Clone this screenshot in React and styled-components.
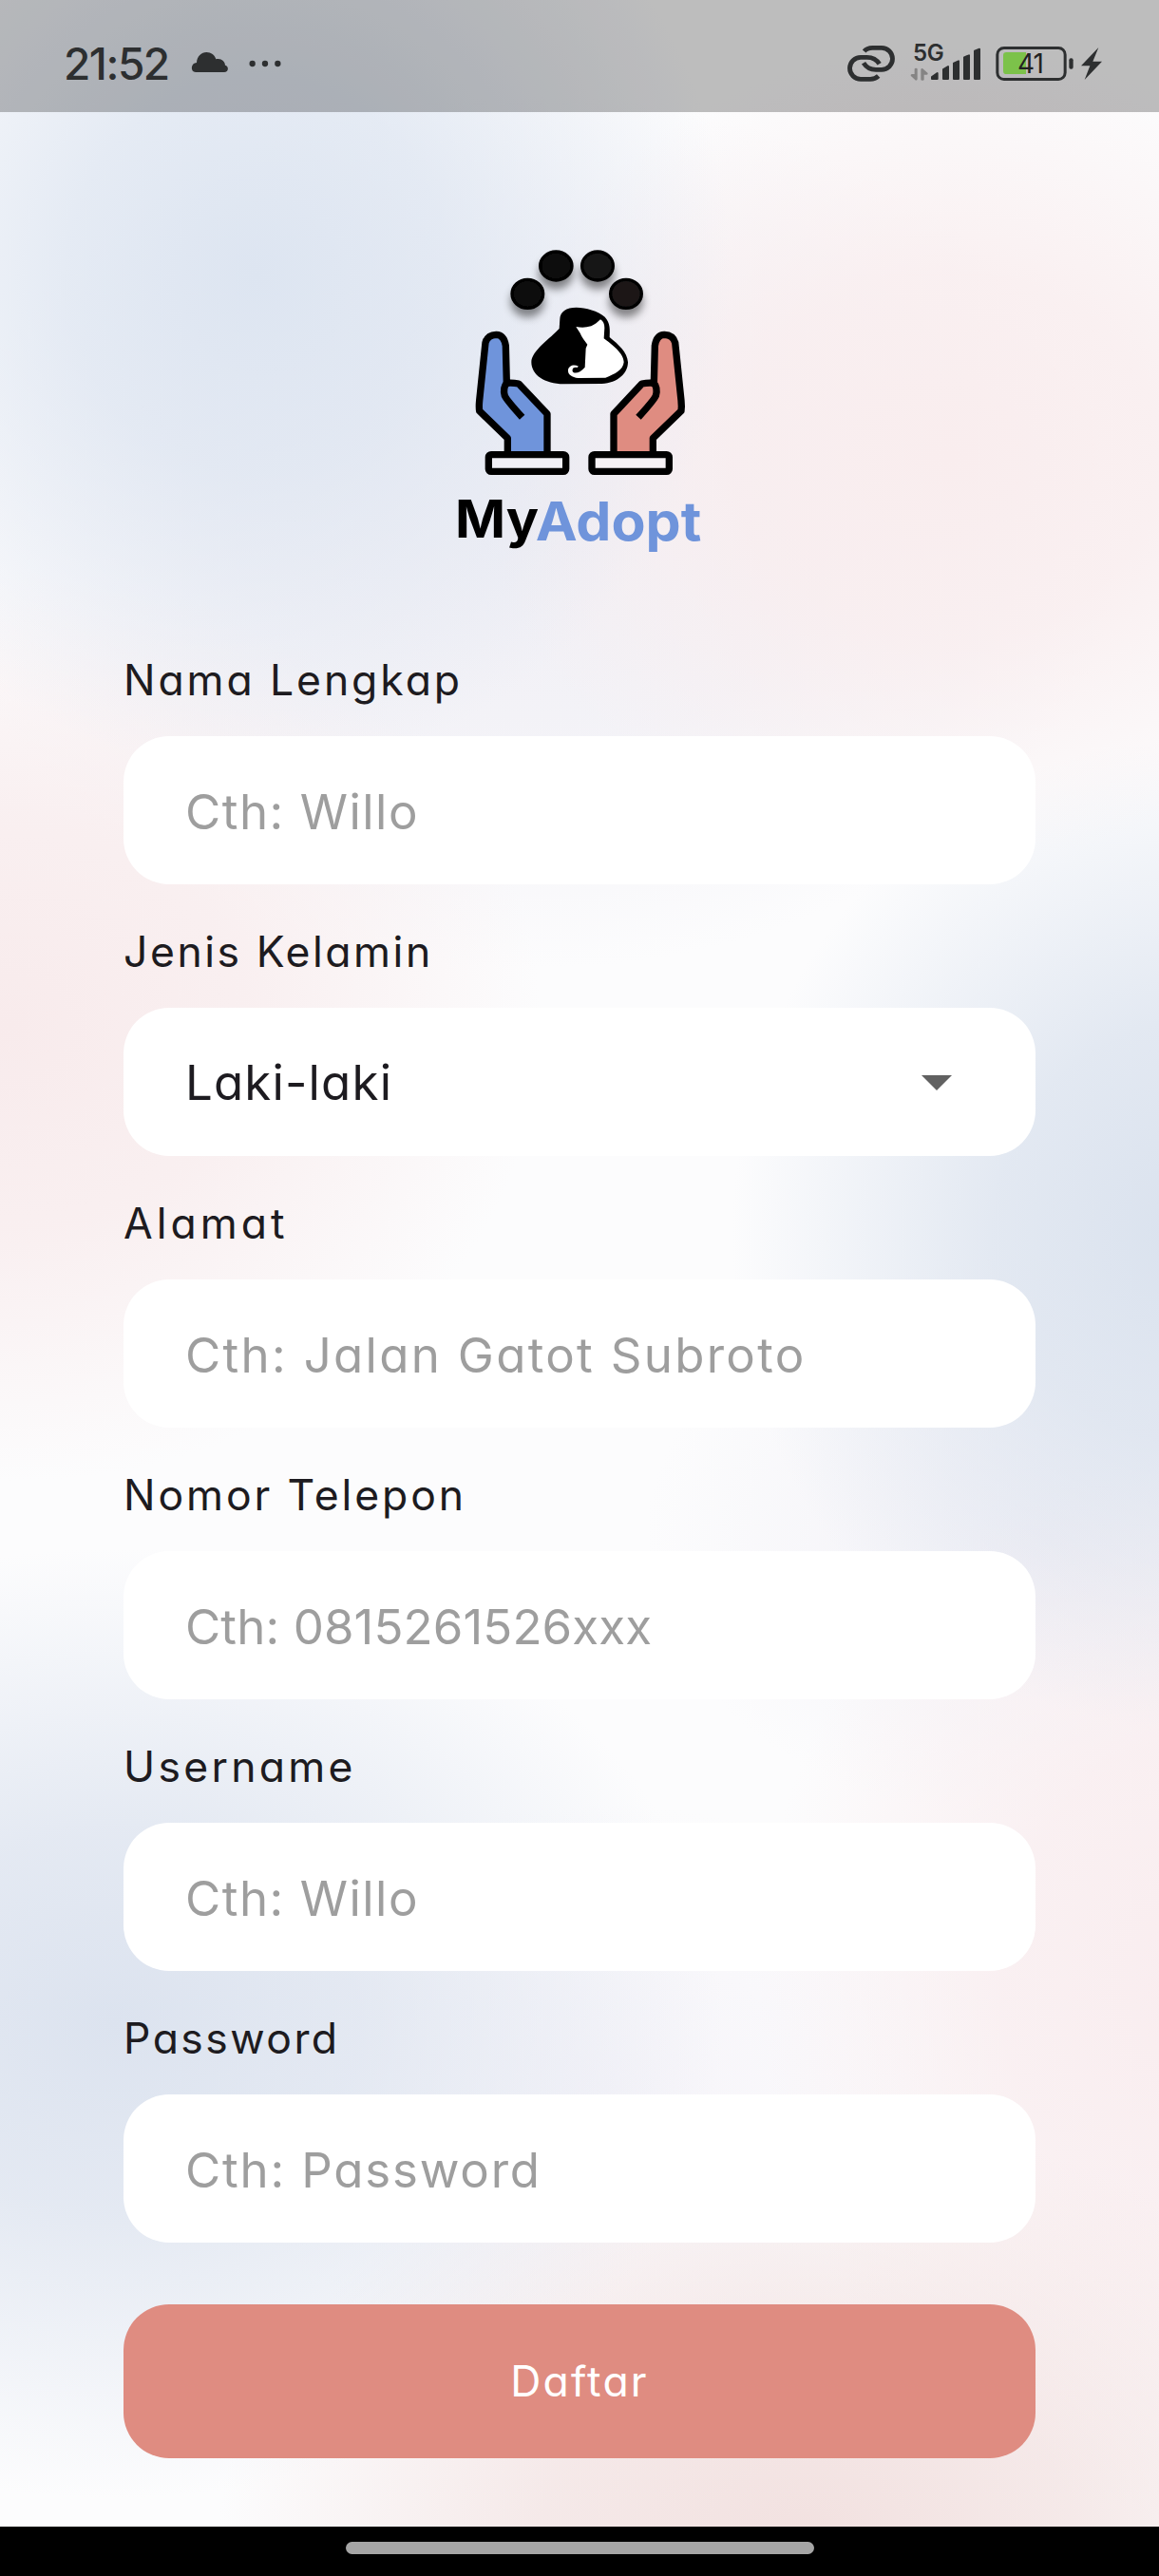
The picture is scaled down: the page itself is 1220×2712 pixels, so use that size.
import React from "react";
import styled, { createGlobalStyle, css } from "styled-components";

const GlobalStyle = createGlobalStyle`
  *, *::before, *::after { box-sizing: border-box; }
  body { margin: 0; background: #fafafc; }
`;

const fontStack = css`font-family: Inter, "Open Sans", sans-serif; font-feature-settings: "cv11";`;

const Screen = styled.div`
  ${fontStack}
  width: 1220px;
  height: 2712px;
  display: flex;
  flex-direction: column;
  color: #1d1b20;
  background:
    radial-gradient(ellipse 500px 520px at 270px 290px, #dde5f1 0%, rgba(221, 229, 241, 0.75) 40%, rgba(221, 229, 241, 0) 100%),
    radial-gradient(ellipse 500px 430px at 1000px 480px, #f9edee 0%, rgba(249, 237, 238, 0.8) 45%, rgba(249, 237, 238, 0) 100%),
    radial-gradient(ellipse 560px 480px at 10px 1080px, #f8ebec 0%, rgba(248, 235, 236, 0.75) 45%, rgba(248, 235, 236, 0) 100%),
    radial-gradient(ellipse 480px 520px at 1250px 1300px, #dae2ee 0%, rgba(218, 226, 238, 0.75) 42%, rgba(218, 226, 238, 0) 100%),
    radial-gradient(ellipse 640px 500px at 120px 2130px, #dce3ef 0%, rgba(220, 227, 239, 0.75) 40%, rgba(220, 227, 239, 0) 100%),
    radial-gradient(ellipse 620px 440px at 850px 2670px, #f2e1e0 0%, rgba(242, 225, 224, 0.7) 45%, rgba(242, 225, 224, 0) 100%),
    radial-gradient(ellipse 460px 560px at 1260px 2090px, #f9edef 0%, rgba(249, 237, 239, 0.8) 45%, rgba(249, 237, 239, 0) 100%),
    radial-gradient(ellipse 620px 460px at 560px 560px, #f0eff5 0%, rgba(240, 239, 245, 0.7) 50%, rgba(240, 239, 245, 0) 100%),
    radial-gradient(ellipse 420px 300px at 640px 2200px, #f6f4f9 0%, rgba(246, 244, 249, 0) 100%),
    radial-gradient(ellipse 420px 300px at 1100px 1620px, #f1f0f6 0%, rgba(241, 240, 246, 0) 100%),
    #fcfcfd;
`;

const StatusBar = styled.header`
  height: 118px;
  flex: none;
  padding: 16px 59px 0 67px;
  display: flex;
  align-items: center;
  justify-content: space-between;
  background: rgba(0, 0, 0, 0.25);
  color: #2d2f30;
`;

const StatusGroup = styled.div`
  display: flex;
  align-items: center;
`;

const Clock = styled.span`
  width: 134px;
  font-size: 46px;
  line-height: 56px;
  font-weight: 500;
  letter-spacing: -1.5px;
  white-space: nowrap;
`;

const Glyph = styled.svg`
  display: block;
  flex: none;
  width: ${(p) => p.$w}px;
  height: 40px;
  margin-left: ${(p) => p.$gap || 0}px;
  overflow: visible;
`;

const Content = styled.main`
  flex: 1;
  display: flex;
  flex-direction: column;
  align-items: center;
  padding: 122px 130px 0;
`;

const Logo = styled.svg`
  display: block;
  flex: none;
  width: 300px;
  height: 360px;
  margin-bottom: 45px;
`;

const Form = styled.form`
  width: 100%;
  display: flex;
  flex-direction: column;
`;

const Label = styled.label`
  height: 130px;
  padding-top: 41px;
  font-size: 44.5px;
  line-height: 60px;
  letter-spacing: ${(p) => p.$tracking}px;
  white-space: nowrap;
`;

const Box = styled.div`
  height: 156px;
  border-radius: 48px;
  background: #fff;
  padding: ${(p) => (p.$select ? 2 : 4)}px 88px 0 65px;
  display: flex;
  align-items: center;
  justify-content: space-between;
  font-size: 51px;
  line-height: 60px;
  color: ${(p) => (p.$select ? "#1d1b20" : "#9e9e9e")};
`;

const Value = styled.span`
  letter-spacing: ${(p) => p.$tracking}px;
  white-space: nowrap;
`;

const Caret = styled.svg`
  width: 32px;
  height: 16px;
  fill: #616161;
`;

const Submit = styled.button`
  ${fontStack}
  height: 162px;
  margin-top: 65px;
  padding: 0;
  border: 0;
  border-radius: 48px;
  background: #df8c81;
  color: #fff;
  font-size: 44.5px;
  line-height: 60px;
  letter-spacing: 2.2px;
`;

const NavBar = styled.footer`
  height: 52px;
  flex: none;
  display: flex;
  justify-content: center;
  align-items: flex-start;
  padding-top: 16px;
  background: #000;
`;

const NavHandle = styled.div`
  width: 493px;
  height: 13px;
  border-radius: 7px;
  background: #a5a5a5;
`;

const fields = [
  { label: "Nama Lengkap", labelTracking: 2.9, value: "Cth: Willo", valueTracking: 1.5 },
  { label: "Jenis Kelamin", labelTracking: 2.55, value: "Laki-laki", valueTracking: 1.15, select: true },
  { label: "Alamat", labelTracking: 4, value: "Cth: Jalan Gatot Subroto", valueTracking: 2.3 },
  { label: "Nomor Telepon", labelTracking: 2.9, value: "Cth: 0815261526xxx", valueTracking: 0.1 },
  { label: "Username", labelTracking: 3.3, value: "Cth: Willo", valueTracking: 1.5 },
  { label: "Password", labelTracking: 2.45, value: "Cth: Password", valueTracking: 1.8 },
];

const PetLogo = () => (
  <Logo viewBox="0 0 900 1080" role="img" aria-label="MyAdopt">
    <defs>
      <filter id="padShadow" x="-50%" y="-50%" width="200%" height="220%">
        <feDropShadow dx="0" dy="24" stdDeviation="12" floodColor="#000" floodOpacity="0.45" />
      </filter>
    </defs>
    <g stroke="#000" strokeWidth="10" filter="url(#padShadow)">
      <ellipse cx="286" cy="208" rx="49" ry="45" fill="#0a0a0a" />
      <ellipse cx="376" cy="120" rx="50" ry="45" fill="#0a0a0a" />
      <ellipse cx="507" cy="120" rx="49" ry="45" fill="#151515" />
      <ellipse cx="597" cy="208" rx="49" ry="45" fill="#1b1819" />
    </g>
    <path d="M440 251 C408 251 389 264 388 288 L386 318 C360 347 298 388 298 424 C298 464 340 493 400 493 L520 492 C572 490 603 458 603 424 C601 392 573 368 545 345 C546 322 548 300 530 281 C508 262 470 251 440 251 Z" fill="#000" />
    <path d="M439 312 C455 315 470 315 487 310 C499 305 507 297 516 289 C525 294 529 303 529 316 L527 349 C552 368 590 396 590 424 C588 448 562 462 532 473 L446 474 C426 471 413 463 414 449 C415 435 432 429 447 437 L442 441 C432 439 426 444 428 453 C434 463 452 457 467 440 L470 380 L475 368 C468 358 456 344 452 332 Z" fill="#fff" />
    <g stroke="#000" strokeWidth="22" strokeLinejoin="round">
      <path d="M223 716 V664 L134 578 Q132 565 134 545 L153 362 Q160 338 187 337 Q212 338 217 372 L220 490 Q238 488 258 492 L348 587 V716 Z" fill="#6f94db" />
      <path d="M221 489 Q207 505 214 530 Q220 544 269 598" fill="none" />
      <path d="M682 716 V664 L771 578 Q773 565 771 545 L752 362 Q745 338 718 337 Q693 338 688 372 L685 490 Q667 488 647 492 L558 587 V716 Z" fill="#df8c81" />
      <path d="M684 489 Q698 505 691 530 Q685 544 636 598" fill="none" />
      <rect x="163" y="716" width="244" height="53" rx="8" fill="#f1f0f6" />
      <rect x="489" y="716" width="244" height="53" rx="8" fill="#f6f2f5" />
    </g>
    <text x="57" y="977" fontFamily="Inter, sans-serif" fontWeight="700" fontSize="166" textLength="264" lengthAdjust="spacingAndGlyphs" fill="#000">My</text>
    <text x="311" y="986" fontFamily="Inter, sans-serif" fontWeight="700" fontSize="168" textLength="524" lengthAdjust="spacingAndGlyphs" fill="#6f94db">Adopt</text>
  </Logo>
);

const CloudIcon = () => (
  <Glyph $w={40} viewBox="603 141 120 120" fill="currentColor">
    <path d="M618 228 C600 228 602 198 621 198 C622 178 636 165 652 165 C667 165 678 174 682 187 C698 183 710 193 711 206 C723 208 723 228 708 228 Z" />
  </Glyph>
);

const DotsIcon = () => (
  <Glyph $w={36} $gap={20} viewBox="783 141 108 120" fill="currentColor">
    <circle cx="797" cy="201" r="9.5" />
    <circle cx="837" cy="201" r="9.5" />
    <circle cx="877" cy="201" r="9.5" />
  </Glyph>
);

const LinkIcon = () => (
  <Glyph $w={52} viewBox="93 141 156 120" fill="none" stroke="currentColor" strokeWidth="14.500">
    <path d="M149 162 Q158 151 175 151 H204 A34.5 34.5 0 0 1 204 220 H186 Q160 220 147 199" />
    <path d="M194 240 Q184 250 168 250 H138 A34.5 34.5 0 0 1 138 181 H158 Q184 181 197 202" />
  </Glyph>
);

const NetworkIcon = () => (
  <Glyph $w={75} $gap={15} viewBox="294 141 225 120" fill="currentColor">
    <text x="303" y="192" fontFamily="Inter, sans-serif" fontWeight="600" fontSize="72" textLength="98">5G</text>
    <g fill="#858484">
      <path d="M308 218 q0 -3 4.500 -3 q4.500 0 4.500 3 V250 q0 4 -5 4 L296 239 q-1 -5 4 -5 H308 Z" />
      <path d="M328 220 q0 -4 5 -4 L350 231 q1 5 -4 5 H338 V251 q0 3 -5 3 q-5 0 -5 -3 Z" />
    </g>
    <g stroke="currentColor" strokeWidth="6" strokeLinejoin="round">
      <path d="M363 243 L380 231 V249 H363 Z" />
      <path d="M399 219 L414 210 V249 H399 Z" />
      <path d="M432 200 L447 193 V249 H432 Z" />
      <path d="M465 181 L480 175 V249 H465 Z" />
      <path d="M498 161 L513 155 V249 H498 Z" />
    </g>
  </Glyph>
);

const BatteryIcon = () => (
  <Glyph $w={84} $gap={14} viewBox="561 141 252 120">
    <rect x="569.5" y="151.500" width="214" height="99" rx="21" fill="none" stroke="currentColor" strokeWidth="9" />
    <path d="M598 165 H660 V234 H598 Q588 234 588 224 V175 Q588 165 598 165 Z" fill="#7cc24a" />
    <rect x="796" y="184" width="13" height="34" rx="6" fill="currentColor" />
    <text x="633" y="231" fontFamily="Inter, sans-serif" fontWeight="400" fontSize="84" textLength="84" fill="#222">41</text>
  </Glyph>
);

const BoltIcon = () => (
  <Glyph $w={24} $gap={6} viewBox="831 141 72 120" fill="currentColor">
    <path d="M889 150 L834 208 H862 L845 252 L900 194 H871 Z" />
  </Glyph>
);

export default function App() {
  return (
    <>
      <GlobalStyle />
      <Screen>
        <StatusBar>
          <StatusGroup>
            <Clock>21:52</Clock>
            <CloudIcon />
            <DotsIcon />
          </StatusGroup>
          <StatusGroup>
            <LinkIcon />
            <NetworkIcon />
            <BatteryIcon />
            <BoltIcon />
          </StatusGroup>
        </StatusBar>
        <Content>
          <PetLogo />
          <Form>
            {fields.map((f) => (
              <React.Fragment key={f.label}>
                <Label $tracking={f.labelTracking}>{f.label}</Label>
                <Box $select={f.select}>
                  <Value $tracking={f.valueTracking}>{f.value}</Value>
                  {f.select && (
                    <Caret viewBox="0 0 32 16"><path d="M0 0H32L16 16Z" /></Caret>
                  )}
                </Box>
              </React.Fragment>
            ))}
            <Submit type="button">Daftar</Submit>
          </Form>
        </Content>
        <NavBar>
          <NavHandle />
        </NavBar>
      </Screen>
    </>
  );
}
